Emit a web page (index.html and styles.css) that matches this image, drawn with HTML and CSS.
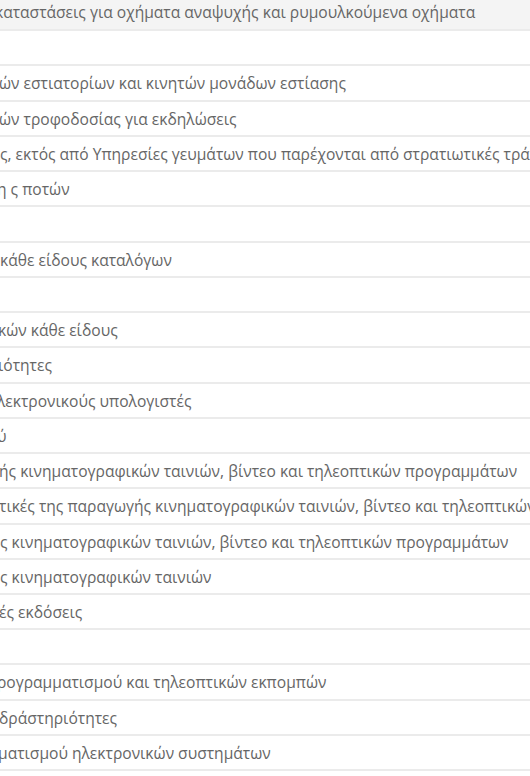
FILE: index.html
```html
<!DOCTYPE html>
<html lang="el">
<head>
<meta charset="utf-8">
<link rel="stylesheet" href="styles.css">
</head>
<body>
<div class="table">
  <div class="row head"><span class="cell cut-4">καταστάσεις για οχήματα αναψυχής και ρυμουλκούμενα οχήματα</span></div>
  <div class="row"><span class="cell">&nbsp;</span></div>
  <div class="row"><span class="cell cut-1">ών εστιατορίων και κινητών μονάδων εστίασης</span></div>
  <div class="row"><span class="cell cut-1">ών τροφοδοσίας για εκδηλώσεις</span></div>
  <div class="row"><span class="cell">ς, εκτός από Υπηρεσίες γευμάτων που παρέχονται από στρατιωτικές τράπεζες</span></div>
  <div class="row"><span class="cell cut-3">η ς ποτών</span></div>
  <div class="row"><span class="cell">&nbsp;</span></div>
  <div class="row"><span class="cell cut-0">κάθε είδους καταλόγων</span></div>
  <div class="row"><span class="cell">&nbsp;</span></div>
  <div class="row"><span class="cell cut-2">κών κάθε είδους</span></div>
  <div class="row"><span class="cell cut-2">ιότητες</span></div>
  <div class="row"><span class="cell cut-3">λεκτρονικούς υπολογιστές</span></div>
  <div class="row"><span class="cell cut-3">ύ</span></div>
  <div class="row"><span class="cell cut-1">ής κινηματογραφικών ταινιών, βίντεο και τηλεοπτικών προγραμμάτων</span></div>
  <div class="row"><span class="cell cut-1">τικές της παραγωγής κινηματογραφικών ταινιών, βίντεο και τηλεοπτικών προγραμμάτων</span></div>
  <div class="row"><span class="cell">ς κινηματογραφικών ταινιών, βίντεο και τηλεοπτικών προγραμμάτων</span></div>
  <div class="row"><span class="cell">ς κινηματογραφικών ταινιών</span></div>
  <div class="row"><span class="cell cut-1">ές εκδόσεις</span></div>
  <div class="row"><span class="cell">&nbsp;</span></div>
  <div class="row"><span class="cell cut-3">ρογραμματισμού και τηλεοπτικών εκπομπών</span></div>
  <div class="row"><span class="cell cut-1">δράστηριότητες</span></div>
  <div class="row"><span class="cell cut-2">ματισμού ηλεκτρονικών συστημάτων</span></div>
  <div class="row"><span class="cell">&nbsp;</span></div>
</div>
</body>
</html>
```

FILE: styles.css
```css
html, body {
  margin: 0;
  padding: 0;
  background: #ffffff;
  overflow: hidden;
}

.table {
  margin-top: -4px;
  width: 530px;
  overflow: hidden;
  font-family: "Open Sans", "Noto Sans", sans-serif;
  font-size: 15.6px;
  color: #666666;
}

.row {
  display: flex;
  padding: 9px 0 7px;
  line-height: 17.24px;
  border-bottom: 2px solid #ebebeb;
  white-space: nowrap;
}

.row.head {
  background: #f4f4f4;
  padding: 8px 0;
}

.cell {
  display: block;
}

.cut-0 { text-indent: 0; }
.cut-1 { text-indent: -1px; }
.cut-2 { text-indent: -2px; }
.cut-3 { text-indent: -3px; }
.cut-4 { text-indent: -5px; }
```
